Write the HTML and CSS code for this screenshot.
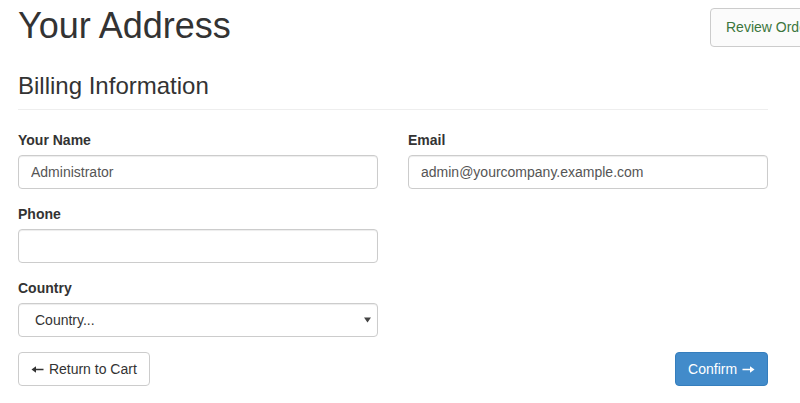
FILE: index.html
```html
<!DOCTYPE html>
<html>
<head>
<meta charset="utf-8">
<link rel="stylesheet" href="styles.css">
</head>
<body>
<div class="page">
  <a class="review-btn" href="#">Review Order</a>
  <h1 class="title">Your Address</h1>
  <h3 class="section-title">Billing Information</h3>
  <form class="form-grid">
    <div class="form-group">
      <label class="lbl">Your Name</label>
      <input class="form-control" type="text" value="Administrator">
    </div>
    <div class="form-group">
      <label class="lbl">Email</label>
      <input class="form-control" type="text" value="admin@yourcompany.example.com">
    </div>
    <div class="form-group">
      <label class="lbl">Phone</label>
      <input class="form-control" type="text" value="">
    </div>
    <div class="spacer"></div>
    <div class="form-group">
      <label class="lbl">Country</label>
      <div class="select-wrap">
        <select class="form-control select">
          <option>Country...</option>
        </select>
        <svg class="caret" width="7" height="6" viewBox="0 0 7 6"><polygon points="0,0.5 7,0.5 3.5,5.5" fill="#444"/></svg>
      </div>
    </div>
    <div class="spacer"></div>
  </form>
  <div class="actions">
    <a class="btn btn-default" href="#"><svg class="icon" width="14" height="14" viewBox="0 0 14 14"><polygon points="0.5,7.5 5,4.3 5,10.7" fill="#333"/><rect x="4" y="6.75" width="8.5" height="1.5" fill="#333"/></svg> Return to Cart</a>
    <a class="btn btn-primary" href="#">Confirm <svg class="icon" width="14" height="14" viewBox="0 0 14 14"><polygon points="13.5,7.5 9,4.3 9,10.7" fill="#fff"/><rect x="1.5" y="6.75" width="8.5" height="1.5" fill="#fff"/></svg></a>
  </div>
</div>
</body>
</html>
```
FILE: styles.css
```css
html, body {
  margin: 0;
  padding: 0;
  overflow: hidden;
  background: #fff;
}
body {
  font-family: "Liberation Sans", Arial, sans-serif;
  font-size: 14px;
  line-height: 20px;
  color: #333;
}
.page {
  position: relative;
  width: 750px;
  padding: 6px 0 0 18px;
}
.title {
  margin: 0;
  font-size: 36px;
  line-height: 40px;
  font-weight: 400;
}
.section-title {
  margin: 27px 0 20px;
  font-size: 24px;
  line-height: 26px;
  font-weight: 400;
  padding-bottom: 10px;
  border-bottom: 1px solid #eee;
}
.review-btn {
  position: absolute;
  top: 8px;
  left: 710px;
  white-space: nowrap;
  display: block;
  padding: 9px 15px;
  line-height: 19px;
  font-size: 14px;
  color: #3c763d;
  text-decoration: none;
  background: #fbfbfb;
  border: 1px solid #ccc;
  border-radius: 4px;
}
.form-grid {
  display: grid;
  grid-template-columns: 360px 360px;
  column-gap: 30px;
  margin: 0;
}
.form-group {
  margin-bottom: 15px;
}
.lbl {
  display: block;
  font-weight: 700;
  margin-bottom: 5px;
}
.form-control {
  display: block;
  box-sizing: border-box;
  width: 100%;
  height: 34px;
  padding: 6px 12px;
  font-family: inherit;
  font-size: 14px;
  line-height: 20px;
  color: #555;
  background: #fff;
  border: 1px solid #ccc;
  border-radius: 4px;
  box-shadow: inset 0 1px 1px rgba(0,0,0,.075);
  outline: none;
  margin: 0;
}
.select-wrap {
  position: relative;
}
.select {
  -webkit-appearance: none;
  appearance: none;
  padding-left: 16px;
  color: #333;
}
.caret {
  position: absolute;
  top: 14px;
  left: 346px;
  pointer-events: none;
}
.actions {
  display: flex;
  justify-content: space-between;
}
.btn {
  display: inline-block;
  padding: 6px 12px;
  font-size: 14px;
  line-height: 20px;
  border: 1px solid transparent;
  border-radius: 4px;
  text-decoration: none;
  white-space: nowrap;
}
.btn-default {
  color: #333;
  background: #fff;
  border-color: #ccc;
}
.btn-primary {
  color: #fff;
  background: #428bca;
  border-color: #357ebd;
}
.icon {
  display: inline-block;
  vertical-align: -2px;
}
```
